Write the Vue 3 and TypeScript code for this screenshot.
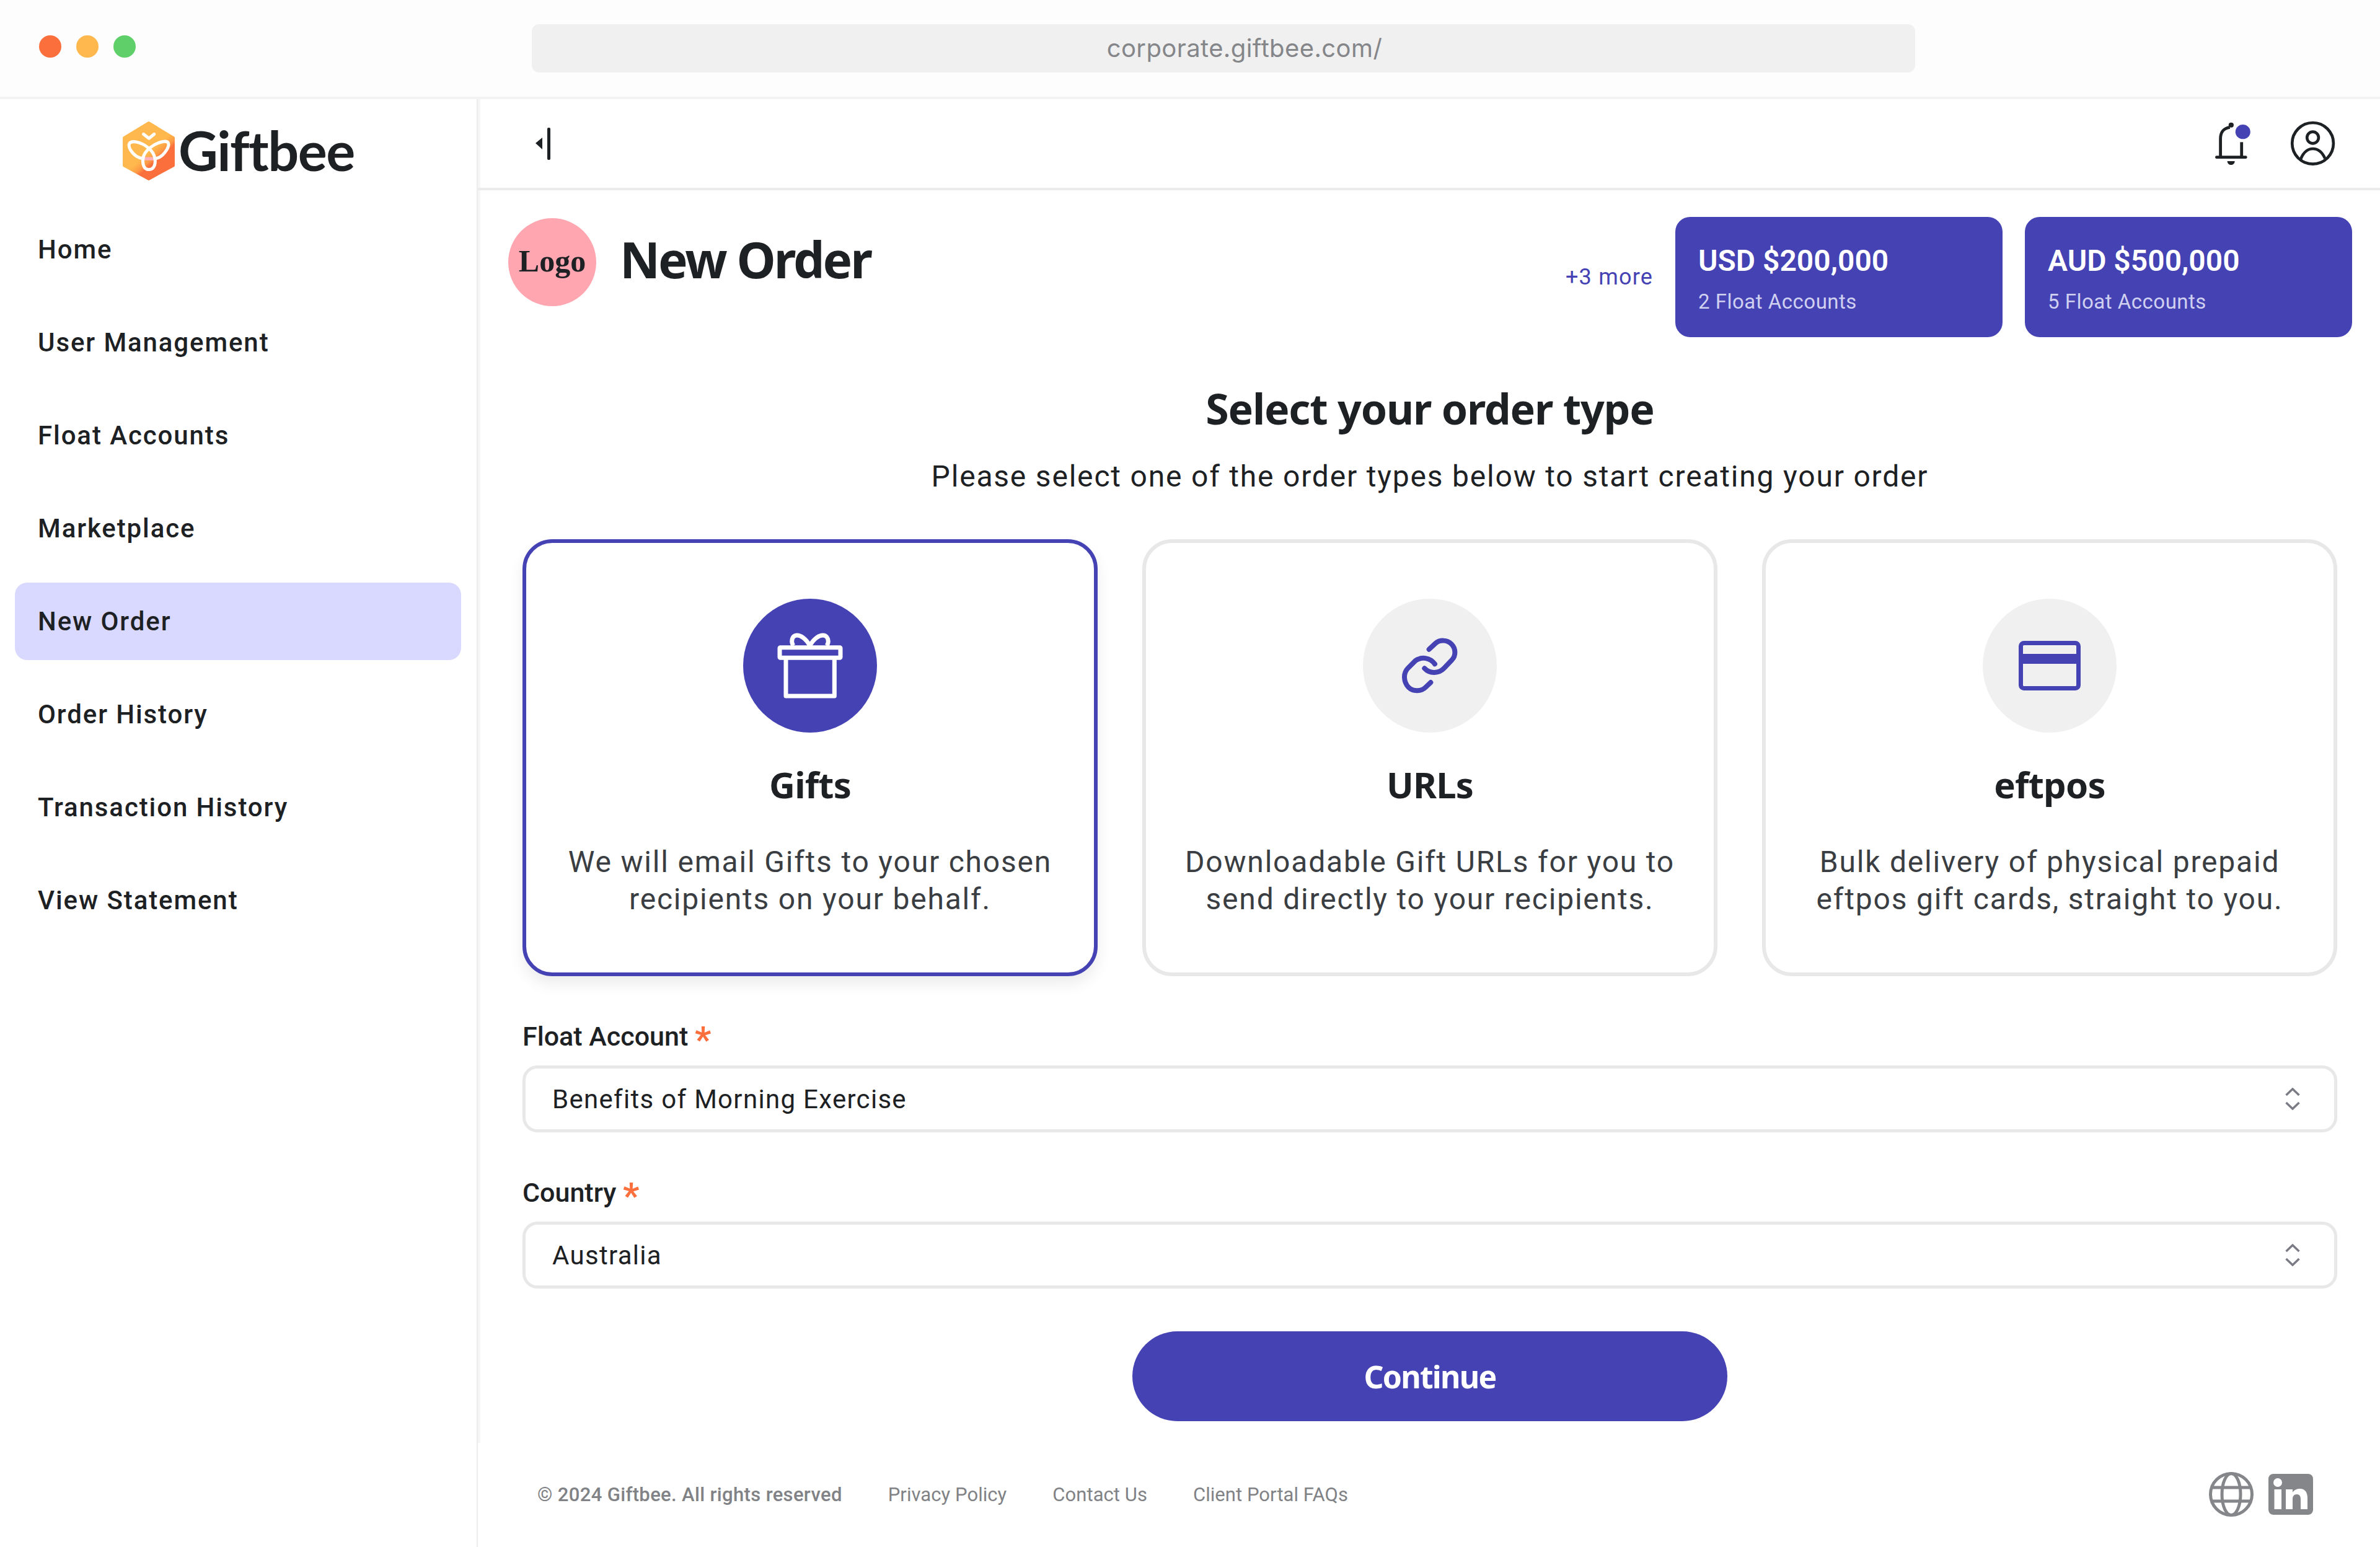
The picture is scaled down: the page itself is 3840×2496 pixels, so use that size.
<template>
  <div class="window">
    <div class="browser-bar">
      <div class="lights">
        <span class="light red"></span>
        <span class="light amber"></span>
        <span class="light green"></span>
      </div>
      <div class="url">corporate.giftbee.com/</div>
    </div>

    <div class="layout">
      <aside class="sidebar">
        <div class="brand">
          <svg class="brand-mark" viewBox="46 41 262 295">
            <defs>
              <linearGradient id="hex" gradientUnits="userSpaceOnUse" x1="100" y1="100" x2="255" y2="280">
                <stop offset="0.52" stop-color="#ffb84d" />
                <stop offset="0.66" stop-color="#fd9a45" />
                <stop offset="0.74" stop-color="#fb6f3c" />
              </linearGradient>
            </defs>
            <path d="M177 53 L296 125 V259 L177 324 L58 259 V125 Z" fill="url(#hex)" stroke="url(#hex)" stroke-width="12" stroke-linejoin="round" />
            <path d="M155 218 H205 L200 234 H157 Z" fill="#ffb0b8" />
            <g fill="none" stroke="#fff" stroke-width="15" stroke-linecap="round" stroke-linejoin="round">
              <path d="M152 108 L178 128 L203 108" />
              <path d="M178 278 C150 278 146 245 150 222 C155 190 200 150 250 143 C280 140 275 165 262 185 C250 205 230 222 208 226" />
              <path d="M178 278 C206 278 212 245 205 218 C198 190 165 155 115 145 C80 140 75 160 90 185 C105 208 125 222 150 226" />
            </g>
          </svg>
          <span class="brand-name">Giftbee</span>
        </div>
        <nav class="nav">
          <a
            v-for="item in navItems"
            :key="item"
            class="nav-item"
            :class="{ active: item === 'New Order' }"
          >
            {{ item }}
          </a>
        </nav>
      </aside>

      <main class="main">
        <header class="topbar">
          <svg class="collapse" viewBox="0 0 26 56">
            <path d="M1 27 L12 18 V37 Z" fill="#1d2124" />
            <rect x="20" y="2" width="5" height="52" rx="2" fill="#1d2124" />
          </svg>
          <div class="top-icons">
            <svg class="bell" viewBox="790 190 170 215" preserveAspectRatio="none">
              <g fill="none" stroke="#1d2124" stroke-width="14">
                <path d="M818 360 V272 C818 240 835 222 862 218" />
                <path d="M917 290 V360" />
                <path d="M800 363 H936" stroke-linecap="round" />
              </g>
              <circle cx="868" cy="207" r="12" fill="#1d2124" />
              <path d="M850 382 H885 C884 406 851 406 850 382 Z" fill="#1d2124" />
              <circle cx="923" cy="240" r="35" fill="#4542b4" />
            </svg>
            <svg class="profile" viewBox="1145 190 220 225">
              <g fill="none" stroke="#1d2124" stroke-width="14">
                <circle cx="1254" cy="302" r="100" />
                <circle cx="1254" cy="274" r="28" />
                <path d="M1195 380 C1210 340 1235 328 1254 328 C1275 328 1298 340 1313 375" />
              </g>
            </svg>
          </div>
        </header>

        <div class="content">
          <section class="page-head">
            <div class="page-title">
              <div class="logo-badge">Logo</div>
              <h1>New Order</h1>
            </div>
            <div class="balances">
              <a class="more">+3 more</a>
              <div v-for="b in balances" :key="b.amount" class="balance">
                <div class="balance-amount">{{ b.amount }}</div>
                <div class="balance-note">{{ b.note }}</div>
              </div>
            </div>
          </section>

          <section class="order">
            <h2>Select your order type</h2>
            <p class="lead">Please select one of the order types below to start creating your order</p>

            <div class="types">
              <div class="type selected">
                <div class="type-icon">
                  <svg class="gift" viewBox="297 138 648 648">
                    <g fill="none" stroke="#fff" stroke-width="21" stroke-linejoin="round">
                      <rect x="474" y="374" width="294" height="50" rx="3" />
                      <path d="M504 424 V609 H739 V424" />
                      <path d="M620 365 C600 330 575 315 558 315 C540 315 533 330 533 345 C533 352 535 358 540 365" />
                      <path d="M620 365 C640 330 665 315 683 315 C700 315 709 330 709 345 C709 352 707 358 702 365" />
                    </g>
                  </svg>
                </div>
                <h3>Gifts</h3>
                <p>We will email Gifts to your chosen<br />recipients on your behalf.</p>
              </div>
              <div class="type">
                <div class="type-icon">
                  <svg class="link" viewBox="90 79 284 284">
                    <g fill="none" stroke="#4542b4" stroke-width="24" stroke-linecap="round">
                      <path d="M227 141 L258 112 C280 93 315 95 335 115 C357 137 358 172 337 193 L300 232 C275 258 232 262 205 233" />
                      <path d="M255 212 C232 180 190 175 160 197 L125 232 C100 258 104 300 128 325 C150 347 190 345 210 325 L235 301" />
                    </g>
                  </svg>
                </div>
                <h3>URLs</h3>
                <p>Downloadable Gift URLs for you to<br />send directly to your recipients.</p>
              </div>
              <div class="type">
                <div class="type-icon">
                  <svg class="card" viewBox="0 0 100 80">
                    <rect x="3.5" y="3.5" width="93" height="73" rx="5" fill="none" stroke="#4542b4" stroke-width="7" />
                    <rect x="3" y="21" width="94" height="16" fill="#4542b4" />
                  </svg>
                </div>
                <h3>eftpos</h3>
                <p>Bulk delivery of physical prepaid<br />eftpos gift cards, straight to you.</p>
              </div>
            </div>

            <div v-for="f in fields" :key="f.label" class="field">
              <label>{{ f.label }} <span class="req">*</span></label>
              <div class="select">
                <span>{{ f.value }}</span>
                <svg class="chev" viewBox="0 0 24 36">
                  <path d="M1.5 12 L12 2 L22.5 12 M1.5 24 L12 34 L22.5 24" fill="none" stroke="#7a7b85" stroke-width="3.5" />
                </svg>
              </div>
            </div>

            <button class="continue">Continue</button>
          </section>

          <footer class="footer">
            <div class="footer-links">
              <span class="copy">© 2024 Giftbee. All rights reserved</span>
              <a>Privacy Policy</a>
              <a>Contact Us</a>
              <a>Client Portal FAQs</a>
            </div>
            <div class="socials">
              <svg class="globe" viewBox="0 0 72 72">
                <g fill="none" stroke="#85868a" stroke-width="5">
                  <circle cx="36" cy="36" r="33.5" />
                  <ellipse cx="36" cy="36" rx="15" ry="33.5" />
                  <path d="M5 25 H67 M5 47 H67" />
                </g>
              </svg>
              <svg class="linkedin" viewBox="0 0 72 66">
                <rect width="72" height="66" rx="8" fill="#85868a" />
                <circle cx="15" cy="14" r="7" fill="#fff" />
                <rect x="9.5" y="25" width="11.5" height="32" fill="#fff" />
                <path d="M28 25 H39 V30 C42 25 47 24 51 24 C60 24 63 31 63 39 V57 H52 V41 C52 36 50 33 46 33 C41 33 39 36 39 41 V57 H28 Z" fill="#fff" />
              </svg>
            </div>
          </footer>
        </div>
      </main>
    </div>
  </div>
</template>

<script setup lang="ts">
interface Balance {
  amount: string;
  note: string;
}

interface Field {
  label: string;
  value: string;
}

const navItems: string[] = [
  'Home',
  'User Management',
  'Float Accounts',
  'Marketplace',
  'New Order',
  'Order History',
  'Transaction History',
  'View Statement'
];

const balances: Balance[] = [
  { amount: 'USD $200,000', note: '2 Float Accounts' },
  { amount: 'AUD $500,000', note: '5 Float Accounts' }
];

const fields: Field[] = [
  { label: 'Float Account', value: 'Benefits of Morning Exercise' },
  { label: 'Country', value: 'Australia' }
];
</script>

<style>
html,
body {
  margin: 0;
  background: #fff;
}
</style>

<style scoped>
.window {
  width: 3840px;
  height: 2496px;
  overflow: hidden;
  display: flex;
  flex-direction: column;
  font-family: "Roboto", "Noto Sans", sans-serif;
  color: #1d2124;
  background: #fff;
}

.browser-bar {
  height: 160px;
  flex-shrink: 0;
  box-sizing: border-box;
  display: flex;
  align-items: flex-start;
  background: #fdfdfd;
  border-bottom: 4px solid #f3f3f3;
}

.lights {
  display: flex;
  gap: 24px;
  margin: 57px 0 0 63px;
}

.light {
  width: 36px;
  height: 36px;
  border-radius: 50%;
}

.red { background: #fb6f3c; }
.amber { background: #ffb84d; }
.green { background: #5fcf69; }

.url {
  width: 2232px;
  height: 78px;
  box-sizing: border-box;
  margin: 39px 0 0 639px;
  padding-left: 68px;
  border-radius: 12px;
  background: #f0f0f0;
  color: #85868a;
  font-family: "Inter", sans-serif;
  font-size: 40px;
  letter-spacing: 0.4px;
  line-height: 78px;
  text-align: center;
}

.layout {
  flex: 1;
  display: flex;
  min-height: 0;
}

.sidebar {
  width: 771px;
  flex-shrink: 0;
  box-sizing: border-box;
  border-right: 2px solid #ececec;
}

.brand {
  height: 180px;
  display: flex;
  align-items: flex-start;
  padding: 36px 0 0 198px;
  box-sizing: border-box;
  gap: 6px;
}

.brand-mark {
  width: 88px;
  height: 99px;
  margin: -2px -2px 0 -2px;
}

.brand-name {
  font-family: "Lato", sans-serif;
  font-size: 88px;
  line-height: 92px;
  font-weight: 700;
  letter-spacing: -1.5px;
}

.nav {
  display: flex;
  flex-direction: column;
  gap: 25px;
  padding: 0 25px 0 24px;
}

.nav-item {
  height: 125px;
  padding-left: 37px;
  border-radius: 20px;
  font-size: 42px;
  font-weight: 500;
  letter-spacing: 1.9px;
  line-height: 125px;
}

.nav-item.active {
  background: #d9d9ff;
}

.main {
  flex: 1;
  min-width: 0;
  display: flex;
  flex-direction: column;
  background: linear-gradient(#f6f6f6, #f6f6f6) no-repeat left top / 4px 2168px;
}

.topbar {
  height: 147px;
  flex-shrink: 0;
  box-sizing: border-box;
  display: flex;
  justify-content: space-between;
  align-items: center;
  padding: 0 70px 0 92px;
  border-bottom: 4px solid #ebebeb;
}

.collapse {
  width: 26px;
  height: 56px;
}

.top-icons {
  display: flex;
  align-items: center;
  gap: 63px;
}

.bell {
  width: 58.5px;
  height: 71.7px;
}

.profile {
  width: 75.8px;
  height: 75px;
}

.content {
  flex: 1;
  min-height: 0;
  padding-top: 45px;
}

.page-head {
  display: flex;
  justify-content: space-between;
  align-items: flex-start;
  padding: 0 45px 0 49px;
}

.page-title {
  display: flex;
  align-items: center;
  gap: 38px;
}

.logo-badge {
  width: 142px;
  height: 142px;
  border-radius: 50%;
  background: #ffa6b0;
  font-family: "Liberation Serif", serif;
  font-size: 50px;
  font-weight: 700;
  line-height: 138px;
  text-align: center;
}

h1 {
  margin: 0 0 10px;
  font-family: "Noto Sans", sans-serif;
  font-size: 80px;
  font-weight: 700;
  letter-spacing: -3px;
  line-height: 100px;
}

.balances {
  display: flex;
  align-items: center;
  gap: 36px;
  margin-top: -2px;
}

.more {
  color: #4542b4;
  font-size: 36px;
  letter-spacing: 1.2px;
}

.balance {
  width: 528px;
  height: 194px;
  box-sizing: border-box;
  padding: 41px 37px 0;
  border-radius: 24px;
  background: #4542b4;
  color: #fff;
}

.balance-amount {
  font-size: 48px;
  font-weight: 600;
  line-height: 60px;
}

.balance-note {
  margin-top: 14px;
  font-size: 33px;
  color: #d0d0f0;
  letter-spacing: 0.5px;
  line-height: 44px;
}

.order {
  padding: 0 69px 0 72px;
  margin-top: 75px;
  text-align: center;
}

h2 {
  margin: 0;
  font-family: "Noto Sans", sans-serif;
  font-size: 68px;
  font-weight: 700;
  letter-spacing: -1.2px;
  line-height: 80px;
}

.lead {
  margin: 40px 0 0;
  font-size: 48px;
  letter-spacing: 1.8px;
  line-height: 60px;
}

.types {
  display: grid;
  grid-template-columns: repeat(3, 1fr);
  gap: 72px;
  margin-top: 71px;
  margin-bottom: 69px;
}

.type {
  height: 705px;
  box-sizing: border-box;
  padding-top: 90px;
  border: 6px solid #e8e8e8;
  border-radius: 48px;
}

.type.selected {
  border-color: #4542b4;
  box-shadow: 0 12px 24px rgba(0, 0, 0, 0.08);
}

.type-icon {
  width: 216px;
  height: 216px;
  margin: 0 auto;
  border-radius: 50%;
  background: #f0f0f0;
  display: flex;
  align-items: center;
  justify-content: center;
}

.selected .type-icon {
  background: #4542b4;
}

.gift {
  width: 216px;
  height: 216px;
}

.link {
  width: 94.7px;
  height: 94.7px;
}

.card {
  width: 100px;
  height: 80px;
}

h3 {
  margin: 49px 0 0;
  font-family: "Noto Sans", sans-serif;
  font-size: 58px;
  font-weight: 700;
  letter-spacing: -0.8px;
  line-height: 70px;
}

.type p {
  margin: 60px 0 0;
  font-size: 48px;
  letter-spacing: 1.8px;
  line-height: 60px;
  color: #3a3e42;
}

.field {
  text-align: left;
  margin-bottom: 69px;
}

.field label {
  display: block;
  font-size: 43px;
  font-weight: 500;
  line-height: 56px;
  margin-bottom: 19px;
}

.req {
  color: #fb6f3c;
  font-size: 58px;
  font-weight: 700;
  line-height: 0;
  vertical-align: -10px;
}

.select {
  height: 108px;
  box-sizing: border-box;
  display: flex;
  justify-content: space-between;
  align-items: center;
  padding: 0 55px 0 43px;
  border: 5px solid #e8e8e8;
  border-radius: 24px;
  font-size: 42px;
  letter-spacing: 1.3px;
}

.chev {
  width: 24px;
  height: 36px;
}

.continue {
  display: block;
  width: 960px;
  height: 145px;
  margin: 10px auto 0;
  border: 0;
  border-radius: 73px;
  background: #4542b4;
  color: #fff;
  font-family: "Noto Sans", sans-serif;
  font-size: 50px;
  font-weight: 700;
  letter-spacing: -1.8px;
}

.footer {
  display: flex;
  justify-content: space-between;
  align-items: center;
  margin-top: 82px;
  padding: 0 108px 0 96px;
  color: #808285;
  font-size: 31px;
}

.footer-links {
  display: flex;
  gap: 74px;
  letter-spacing: 0.05px;
}

.copy {
  font-weight: 500;
  letter-spacing: 0.35px;
}

.socials {
  display: flex;
  align-items: center;
  gap: 24px;
}

.globe {
  width: 72px;
  height: 72px;
}

.linkedin {
  width: 72px;
  height: 66px;
}
</style>
